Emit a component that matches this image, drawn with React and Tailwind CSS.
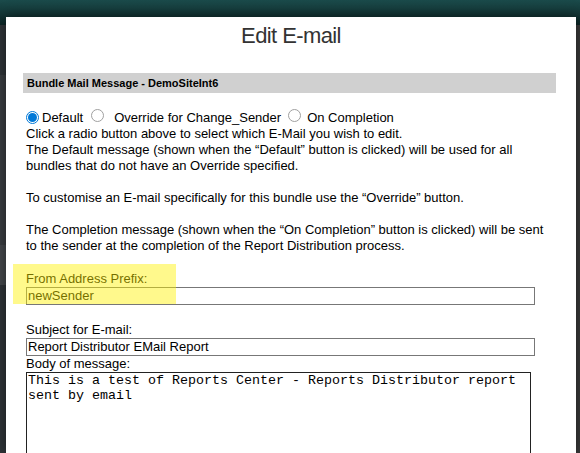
import React from "react";

function Radio({ checked }) {
  return checked ? (
    <span className="inline-flex h-[13px] w-[13px] shrink-0 items-center justify-center rounded-full border border-[#0078d7] bg-white">
      <span className="h-[9px] w-[9px] rounded-full bg-[#0078d7]"></span>
    </span>
  ) : (
    <span className="inline-block h-[13px] w-[13px] shrink-0 rounded-full border border-[#a0a0a0] bg-white"></span>
  );
}

export default function App() {
  return (
    <div className="relative h-[453px] w-[580px] overflow-hidden bg-[#35393d] font-['Liberation_Sans',Arial,sans-serif] text-black">
      <div className="h-[25px] bg-gradient-to-b from-[#1b4b4b] to-[#0c2626]"></div>
      <div className="flex h-[428px]">
        <div className="flex w-[6px] flex-col bg-[#2f3438]">
          <div className="h-[50px]"></div>
          <div className="h-[170px] bg-[#3a3d41]"></div>
          <div className="h-[40px] bg-[#45484c]"></div>
        </div>
        <div className="flex-1 bg-[#3a3a3a]"></div>
      </div>

      <div className="absolute left-[6px] top-[17px] h-[436px] w-[570px] bg-white px-[20px] shadow-[0_0_12px_rgba(0,0,0,0.5)]">
        <h1 className="pt-[7px] text-center text-[22px] leading-[24px] tracking-[-0.6px] text-[#333]">Edit E-mail</h1>

        <div className="-ml-[3px] mt-[25px] flex h-[20px] items-center bg-[#d0d0d0] pl-[4px] text-[11px] font-bold">
          Bundle Mail Message - DemoSiteInt6
        </div>

        <div className="mt-[16px] text-[13px] leading-[16px]">
          <div className="flex items-center">
            <Radio checked />
            <span className="ml-[3px]">Default</span>
            <span className="ml-[8px]"><Radio /></span>
            <span className="ml-[10px]">Override for Change_Sender</span>
            <span className="ml-[7px]"><Radio /></span>
            <span className="ml-[6px]">On Completion</span>
          </div>
          <p>Click a radio button above to select which E-Mail you wish to edit.</p>
          <p>The Default message (shown when the “Default” button is clicked) will be used for all bundles that do not have an Override specified.</p>
          <p className="mt-[16px]">To customise an E-mail specifically for this bundle use the “Override” button.</p>
          <p className="mt-[16px]">The Completion message (shown when the “On Completion” button is clicked) will be sent to the sender at the completion of the Report Distribution process.</p>
        </div>

        <div className="mt-[17px] text-[13px] leading-[16px]">
          <div>From Address Prefix:</div>
          <div className="flex h-[18px] w-[509px] items-center border border-[#777] pl-[1px]">newSender</div>
          <div className="mt-[17px]">Subject for E-mail:</div>
          <div className="flex h-[18px] w-[509px] items-center border border-[#777] pl-[1px]">Report Distributor EMail Report</div>
          <div>Body of message:</div>
          <div className="h-[120px] w-[505px] border border-[#222] px-[1px] font-['Liberation_Mono','Courier_New',monospace] text-[13.33px] leading-[15px]">
            This is a test of Reports Center - Reports Distributor report sent by email
          </div>
        </div>
      </div>

      <div className="pointer-events-none absolute left-[13px] top-[264px] h-[40px] w-[163px] bg-[#fff200]/45"></div>
    </div>
  );
}
